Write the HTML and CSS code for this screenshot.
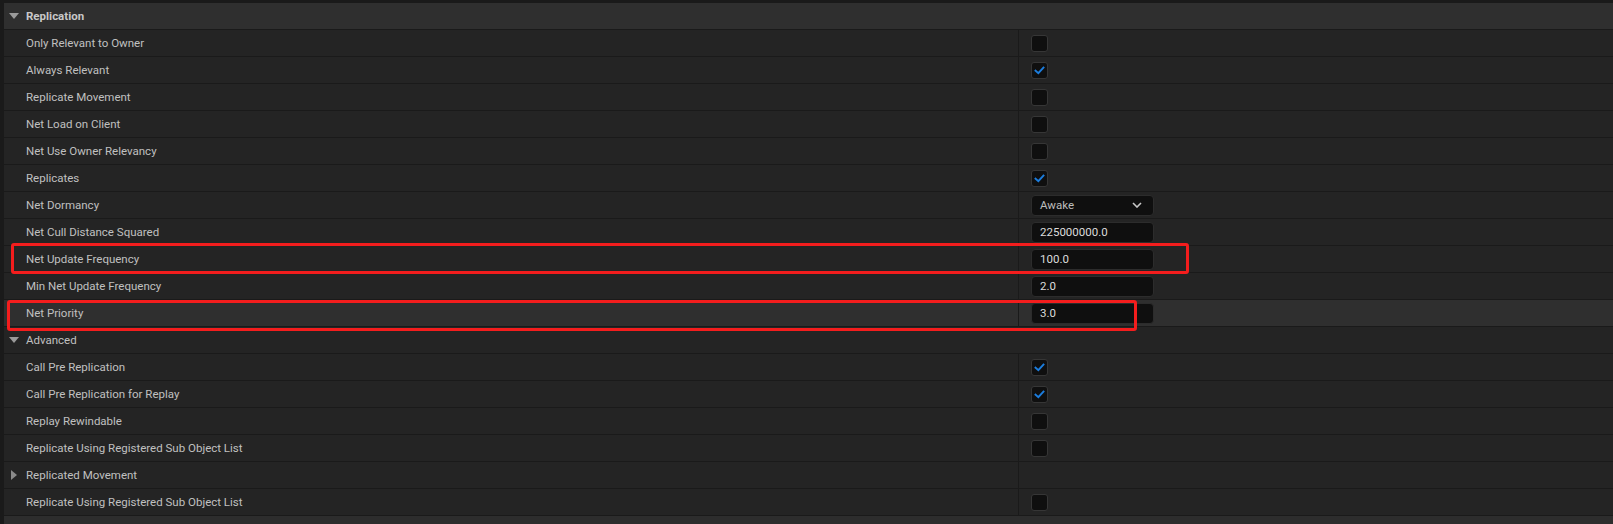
FILE: index.html
```html
<!DOCTYPE html>
<html>
<head>
<meta charset="utf-8">
<link rel="stylesheet" href="styles.css">
</head>
<body>
<div class="panel">
  <div class="row category">
    <div class="label"><span class="arrow down"></span><b>Replication</b></div>
  </div>
  <div class="row"><div class="label">Only Relevant to Owner</div><div class="value"><span class="check"></span></div></div>
  <div class="row"><div class="label">Always Relevant</div><div class="value"><span class="check on"><svg viewBox="0 0 17 17"><path d="M4 8.6 L7.2 11.6 L13 5.2"/></svg></span></div></div>
  <div class="row"><div class="label">Replicate Movement</div><div class="value"><span class="check"></span></div></div>
  <div class="row"><div class="label">Net Load on Client</div><div class="value"><span class="check"></span></div></div>
  <div class="row"><div class="label">Net Use Owner Relevancy</div><div class="value"><span class="check"></span></div></div>
  <div class="row"><div class="label">Replicates</div><div class="value"><span class="check on"><svg viewBox="0 0 17 17"><path d="M4 8.6 L7.2 11.6 L13 5.2"/></svg></span></div></div>
  <div class="row"><div class="label">Net Dormancy</div><div class="value"><span class="box combo">Awake<svg class="chev" viewBox="0 0 10 6"><path d="M1 1 L5 5 L9 1"/></svg></span></div></div>
  <div class="row"><div class="label">Net Cull Distance Squared</div><div class="value"><span class="box">225000000.0</span></div></div>
  <div class="row"><div class="label">Net Update Frequency</div><div class="value"><span class="box">100.0</span></div></div>
  <div class="row"><div class="label">Min Net Update Frequency</div><div class="value"><span class="box">2.0</span></div></div>
  <div class="row hl"><div class="label">Net Priority</div><div class="value"><span class="box">3.0</span></div></div>
  <div class="row sub">
    <div class="label"><span class="arrow down small"></span>Advanced</div>
  </div>
  <div class="row"><div class="label">Call Pre Replication</div><div class="value"><span class="check on"><svg viewBox="0 0 17 17"><path d="M4 8.6 L7.2 11.6 L13 5.2"/></svg></span></div></div>
  <div class="row"><div class="label">Call Pre Replication for Replay</div><div class="value"><span class="check on"><svg viewBox="0 0 17 17"><path d="M4 8.6 L7.2 11.6 L13 5.2"/></svg></span></div></div>
  <div class="row"><div class="label">Replay Rewindable</div><div class="value"><span class="check"></span></div></div>
  <div class="row"><div class="label">Replicate Using Registered Sub Object List</div><div class="value"><span class="check"></span></div></div>
  <div class="row"><div class="label"><span class="arrow right"></span>Replicated Movement</div><div class="value"></div></div>
  <div class="row"><div class="label">Replicate Using Registered Sub Object List</div><div class="value"><span class="check"></span></div></div>
  <div class="foot"></div>

  <div class="mark m1"></div>
  <div class="mark m2"></div>
</div>
</body>
</html>
```

FILE: styles.css
```css
html, body {
  margin: 0;
  padding: 0;
  background: #1a1a1a;
}
body {
  width: 1613px;
  height: 524px;
  overflow: hidden;
  font-family: Roboto, "Noto Sans", sans-serif;
  font-size: 11.5px;
  color: #c0c0c0;
}
.panel {
  position: relative;
  padding: 3px 0 0 4px;
  display: flex;
  flex-direction: column;
}
.row {
  display: flex;
  height: 26px;
  border-bottom: 1px solid #1a1a1a;
  background: #242424;
}
.row.category {
  background: #2f2f2f;
}
.row.hl {
  background: #2f2f2f;
}
.label {
  position: relative;
  width: 992px;
  padding-left: 22px;
  display: flex;
  align-items: center;
  border-right: 1px solid #1a1a1a;
  white-space: nowrap;
}
.category .label, .sub .label {
  border-right: none;
}
.category b {
  font-weight: 700;
  color: #c8c8c8;
}
.value {
  flex: 1;
  display: flex;
  align-items: center;
  padding-left: 12px;
}
.arrow {
  position: absolute;
  width: 0;
  height: 0;
}
.arrow.down {
  left: 5px;
  top: 10px;
  border-left: 5px solid transparent;
  border-right: 5px solid transparent;
  border-top: 6px solid #9a9a9a;
}
.arrow.down.small {
  left: 5px;
}
.arrow.right {
  left: 7px;
  top: 8px;
  border-top: 5px solid transparent;
  border-bottom: 5px solid transparent;
  border-left: 6px solid #8a8a8a;
}
.check {
  width: 15px;
  height: 15px;
  background: #0f0f0f;
  border: 1px solid #363636;
  border-radius: 3px;
  display: flex;
  align-items: center;
  justify-content: center;
}
.check svg {
  width: 15px;
  height: 15px;
}
.check path {
  fill: none;
  stroke: #1c7ddd;
  stroke-width: 2.2;
  stroke-linecap: square;
  stroke-linejoin: miter;
}
.box {
  box-sizing: border-box;
  width: 123px;
  height: 21px;
  background: #0f0f0f;
  border: 1px solid #2c2c2c;
  border-radius: 4px;
  padding-left: 8px;
  display: flex;
  align-items: center;
  color: #dcdcdc;
}
.combo {
  color: #bdbdbd;
  justify-content: space-between;
  padding-right: 11px;
}
.chev {
  width: 10px;
  height: 6px;
}
.chev path {
  fill: none;
  stroke: #c8c8c8;
  stroke-width: 1.6;
}
.foot {
  height: 8px;
  background: #2d2d2d;
}
.mark {
  position: absolute;
  box-sizing: border-box;
  border: 3px solid #f41d1d;
  border-radius: 3px;
}
.m1 {
  left: 11px;
  top: 243px;
  width: 1178px;
  height: 31px;
}
.m2 {
  left: 7px;
  top: 300px;
  width: 1130px;
  height: 31px;
}
```
